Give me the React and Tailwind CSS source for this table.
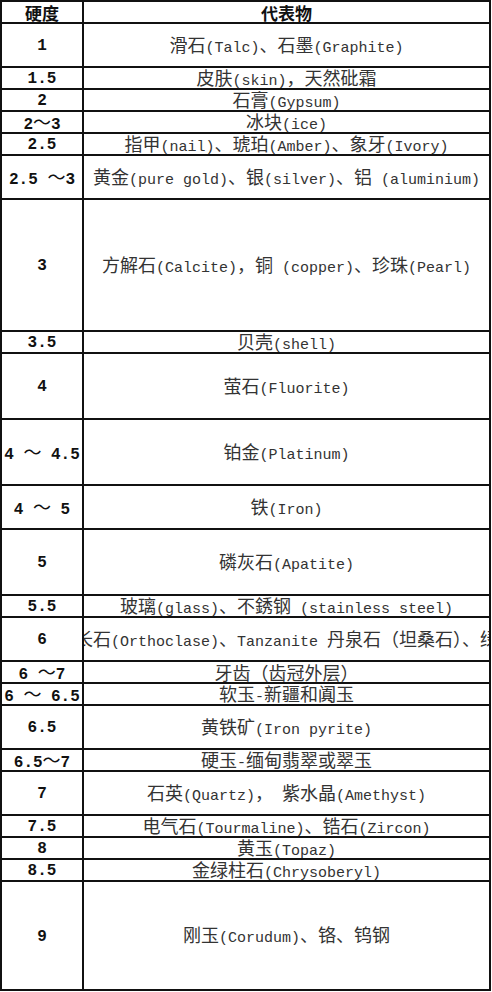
import React from "react";

const rows = [
  { h: "1", t: "滑石(Talc)、石墨(Graphite)", size: "h-[44px]" },
  { h: "1.5", t: "皮肤(skin)，天然砒霜", size: "h-[22px]" },
  { h: "2", t: "石膏(Gypsum)", size: "h-[22px]" },
  { h: "2～3", t: "冰块(ice)", size: "h-[22px]" },
  { h: "2.5", t: "指甲(nail)、琥珀(Amber)、象牙(Ivory)", size: "h-[22px]" },
  { h: "2.5 ～3", t: "黄金(pure gold)、银(silver)、铝 (aluminium)", size: "h-[44px]" },
  { h: "3", t: "方解石(Calcite)，铜 (copper)、珍珠(Pearl)", size: "h-[132px]" },
  { h: "3.5", t: "贝壳(shell)", size: "h-[22px]" },
  { h: "4", t: "萤石(Fluorite)", size: "h-[66px]" },
  { h: "4 ～ 4.5", t: "铂金(Platinum)", size: "h-[66px]" },
  { h: "4 ～ 5", t: "铁(Iron)", size: "h-[44px]" },
  { h: "5", t: "磷灰石(Apatite)", size: "h-[66px]" },
  { h: "5.5", t: "玻璃(glass)、不銹钢 (stainless steel)", size: "h-[22px]" },
  { h: "6", t: "正长石(Orthoclase)、Tanzanite 丹泉石（坦桑石）、绿松", size: "h-[44px]" },
  { h: "6 ～7", t: "牙齿（齿冠外层）", size: "h-[22px]" },
  { h: "6 ～ 6.5", t: "软玉-新疆和阗玉", size: "h-[22px]" },
  { h: "6.5", t: "黄铁矿(Iron pyrite)", size: "h-[44px]" },
  { h: "6.5～7", t: "硬玉-缅甸翡翠或翠玉", size: "h-[22px]" },
  { h: "7", t: "石英(Quartz)， 紫水晶(Amethyst)", size: "h-[44px]" },
  { h: "7.5", t: "电气石(Tourmaline)、锆石(Zircon)", size: "h-[22px]" },
  { h: "8", t: "黄玉(Topaz)", size: "h-[22px]" },
  { h: "8.5", t: "金绿柱石(Chrysoberyl)", size: "h-[22px]" },
  { h: "9", t: "刚玉(Corudum)、铬、钨钢", size: "h-[109px]" },
];

// split latin / cjk runs: latin is half width (mono), cjk full width
function Mixed({ text, bold }) {
  const parts = text.split(/([\u2E80-\u9FFF\u3000-\u303F\uFF00-\uFFEF]+)/);
  return (
    <span className="whitespace-pre">
      {parts.map((p, i) =>
        !p ? null : i % 2 ? (
          <span key={i} className="font-['Noto_Sans_CJK_SC',sans-serif] text-[18px]">
            {p}
          </span>
        ) : (
          <span
            key={i}
            className={`font-['Liberation_Mono',monospace] ${bold ? "text-[16px] font-bold" : "text-[15px]"}`}
          >
            {p}
          </span>
        )
      )}
    </span>
  );
}

export default function App() {
  return (
    <div className="min-h-screen bg-white">
      <div className="w-[491px] border-2 border-b-0 border-[#111] leading-none">
        <div className="flex h-[22px] border-b-2 border-[#111] font-['Noto_Sans_CJK_SC',sans-serif] text-[17px] font-bold text-[#111]">
          <div className="flex w-[82px] items-center justify-center border-r-2 border-[#111]">硬度</div>
          <div className="flex flex-1 items-center justify-center">代表物</div>
        </div>
        {rows.map((r) => (
          <div key={r.h} className={`flex ${r.size} border-b-2 border-[#111]`}>
            <div className="flex w-[82px] shrink-0 items-center justify-center overflow-hidden border-r-2 border-[#111] text-[#111]">
              <Mixed text={r.h} bold />
            </div>
            <div className="flex min-w-0 flex-1 items-center justify-center overflow-hidden text-[#333]">
              <Mixed text={r.t} />
            </div>
          </div>
        ))}
      </div>
    </div>
  );
}
